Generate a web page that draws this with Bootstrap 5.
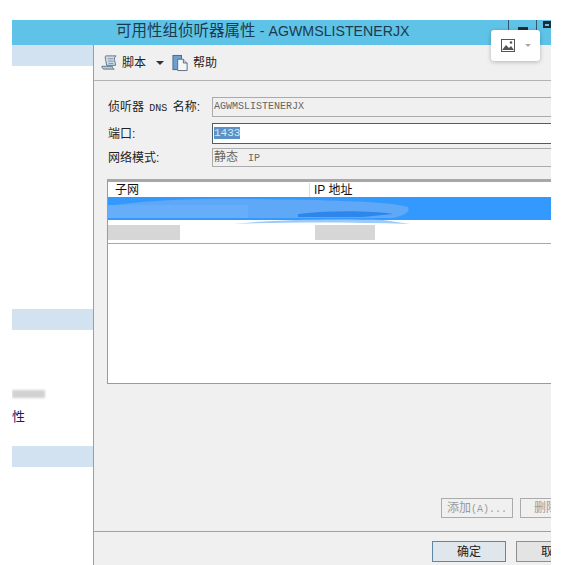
<!DOCTYPE html>
<html lang="zh-CN">
  <head>
    <meta charset="UTF-8" />
    <title>可用性组侦听器属性</title>
    <link href="https://cdn.jsdelivr.net/npm/bootstrap@5.3.0/dist/css/bootstrap.min.css" rel="stylesheet" />
    <style>
      html, body { height: 565px; overflow: hidden; background: #fff; }
      body { font-family: "Liberation Sans", "Noto Sans CJK SC", sans-serif; font-size: 12px; color: #222; }
      .shot { width: 539px; margin: 20px 0 0 12px; height: 545px; position: relative; overflow: hidden; }
      .titlebar { height: 25px; background: #5fc3e8; color: #1d3a4d; font-size: 15.5px; line-height: 22px; padding-left: 104px; white-space: nowrap; }
      .titlebar span { font-size: 14.2px; }
      .winbtns { position: absolute; top: 0; left: 496px; height: 15px; width: 43px; border-left: 1px solid #33586b; }
      .winbtns i { position: absolute; left: 9px; top: 7px; width: 10px; height: 3px; background: #1d2c36; }
      .winbtns b { position: absolute; left: 27px; top: 0; width: 16px; height: 15px; border-left: 1px solid #33586b; }
      .winbtns b::after { content: ""; position: absolute; left: 6px; top: 1px; width: 8px; height: 7px; border: 2px solid #1d2c36; border-top-width: 3px; }
      .dlgbody { height: 520px; }
      .sidepane { width: 81px; flex: none; background: #fff; }
      .sidestrip { height: 21px; background: #d3e2f0; }
      .sidegap1 { height: 243px; }
      .sideblur { width: 33px; height: 8px; background: #d2d2d2; margin-top: 60px; filter: blur(1px); }
      .sidetxt { color: #1b1b66; font-size: 13px; line-height: 18px; margin-top: 10px; height: 18px; }
      .sidestrip.last { margin-top: 20px; }
      .mainpane { flex: 1; min-width: 0; background: #f0f0f0; border-left: 1px solid #9e9e9e; }
      .toolstrip { height: 36px; border-bottom: 1px solid #b4b4b4; padding-left: 7px; font-size: 12px; flex: none; }
      .toolstrip svg { flex: none; }
      .caret-mini { width: 0; height: 0; border: 4px solid transparent; border-top-color: #333; border-bottom: 0; margin: 0 8px 0 10px; }
      .formzone { padding: 16px 0 0 14px; flex: none; }
      .fieldrow { margin-bottom: 4px; }
      .fieldrow.r1 { height: 20px; margin-bottom: 6px; }
      .fieldrow.r2 { height: 21px; }
      .fieldrow.r3 { height: 19px; margin-bottom: 0; }
      .fieldrow label { width: 104px; flex: none; font-size: 12px; white-space: nowrap; }
      .fake-input { flex: 1; height: 100%; border: 1px solid #ababab; border-right: 0; padding-left: 1px; font-size: 12px; color: #666; background: #f0f0f0; line-height: 17px; white-space: nowrap; }
      .fake-input.on { background: #fff; border-color: #4a5f6c; }
      .fake-input.on span { background: #5a92c8; color: #d8e8f5; font-family: "Liberation Mono", monospace; font-size: 11px; }
      .monotxt { font-family: "Liberation Mono", monospace; font-size: 10px; }
      .fake-input.monotxt { font-size: 10px; }
      .fieldrow label .monotxt { margin: 0 2px; }
      .fake-input .gapip { margin-left: 4px; }
      .gridbox { margin: 12px 0 0 13px; height: 205px; border: 1px solid #9b9b9b; border-top: 3px solid #a8a8a8; border-right: 0; background: #fff; position: relative; flex: none; }
      .gridhead { height: 15px; line-height: 15px; padding-top: 1px; font-size: 12px; color: #111; box-sizing: border-box; }
      .gridhead div:first-child { width: 202px; padding-left: 7px; border-right: 1px solid #ddd; }
      .gridhead div:last-child { padding-left: 4px; }
      .rowsel { height: 23px; background: #3399ff; }
      .rowplain { height: 24px; border-bottom: 1px solid #a8a8a8; background: #fff; }
      .smearlay { position: absolute; left: 0; top: 15px; }
      .blurcell { position: absolute; height: 15px; background: #d6d6d6; top: 43px; }
      .blurcell.b1 { left: 0; width: 72px; }
      .blurcell.b2 { left: 207px; width: 60px; }
      .actrow { margin-top: auto; padding: 0 0 13px 347px; flex: none; }
      .dlgbtn { height: 20px; width: 72px; flex: none; border: 1px solid #ababab; background: #f0f0f0; color: #9a9a9a; font-size: 12px; line-height: 18px; text-align: center; padding: 0; border-radius: 0; white-space: nowrap; }
      .delbtn { margin-left: 7px; text-align: left; padding-left: 13px; overflow: hidden; }
      .footzone { height: 34px; border-top: 1px solid #a0a0a0; flex: none; padding: 9px 0 0 338px; }
      .okbtn { width: 74px; height: 21px; background: #dfe6ec; color: #222; border-color: #5c87a8; }
      .cancelbtn { width: 60px; height: 21px; background: #e4e4e4; color: #222; border-color: #8f8f8f; text-align: left; padding-left: 24px; margin-left: 10px; }
      .imgpop { position: absolute; left: 479px; top: 10px; width: 49px; height: 31px; background: #fff; border-radius: 3px; box-shadow: 0 1px 4px rgba(0,0,0,.25); }
      .imgpop .caret-mini { border-width: 3px; border-bottom: 0; border-top-color: #aaa; margin: 0 0 0 10px; }
    </style>
  </head>
  <body>
    <div class="shot">
      <div class="titlebar">可用性组侦听器属性 <span>- AGWMSLISTENERJX</span></div>
      <div class="winbtns"><i></i><b></b></div>

      <div class="dlgbody d-flex">
        <div class="sidepane">
          <div class="sidestrip"></div>
          <div class="sidegap1"></div>
          <div class="sidestrip"></div>
          <div class="sideblur"></div>
          <div class="sidetxt">性</div>
          <div class="sidestrip last"></div>
        </div>

        <div class="mainpane d-flex flex-column">
          <div class="toolstrip d-flex align-items-center">
            <svg width="17" height="17" viewBox="0 0 18 18">
              <path d="M5 2h11c-2 1-2 3-1.500 5l1 5H6L5 7C4.600 5 4 3 5 2z" fill="#cfdde8" stroke="#5f7488" />
              <path d="M1 13h11c0 2 1 3 2 3H3c-1 0-2-1-2-3z" fill="#b9cad8" stroke="#5f7488" />
              <path d="M7 5h6M7.500 7.500h6M8 10h5" stroke="#7f92a4" />
            </svg>
            <span class="ms-1">脚本</span>
            <span class="caret-mini"></span>
            <svg width="17" height="18" viewBox="0 0 18 18">
              <rect x="1" y="1" width="9" height="15" fill="#6f9fd0" stroke="#49678a" />
              <path d="M6 5h6l4 4v8H6z" fill="#f4f6f8" stroke="#5c6c7c" />
              <path d="M12 5v4h4" fill="#c8d2dc" stroke="#5c6c7c" />
            </svg>
            <span class="ms-1">帮助</span>
          </div>

          <div class="formzone">
            <div class="fieldrow r1 d-flex align-items-center">
              <label>侦听器 <span class="monotxt">DNS</span> 名称:</label>
              <div class="fake-input monotxt">AGWMSLISTENERJX</div>
            </div>
            <div class="fieldrow r2 d-flex align-items-center">
              <label>端口:</label>
              <div class="fake-input on"><span>1433</span></div>
            </div>
            <div class="fieldrow r3 d-flex align-items-center">
              <label>网络模式:</label>
              <div class="fake-input">静态<span class="monotxt gapip"> IP</span></div>
            </div>
          </div>

          <div class="gridbox">
            <div class="gridhead d-flex"><div>子网</div><div>IP 地址</div></div>
            <div class="rowsel"></div>
            <div class="rowplain"></div>
            <svg class="smearlay" width="320" height="30" viewBox="0 0 320 30">
              <path d="M0 9C40 3 90 1 150 2C210 3 280 4 300 10C302 15 298 18 285 21H0z" fill="#5fa8f8" />
              <path d="M0 8H140V21H0z" fill="#66aefa" />
              <path d="M190 17C225 13 265 14 285 17L255 20H190z" fill="#2f86ea" />
              <path d="M125 27C170 22 230 22 275 23L302 27C240 25 180 25 125 27z" fill="#9ccbfb" />
            </svg>
            <div class="blurcell b1"></div>
            <div class="blurcell b2"></div>
          </div>

          <div class="actrow d-flex">
            <button class="dlgbtn" type="button">添加<span class="monotxt">(A)...</span></button>
            <button class="dlgbtn delbtn" type="button">删除</button>
          </div>

          <div class="footzone d-flex">
            <button class="dlgbtn okbtn" type="button">确定</button>
            <button class="dlgbtn cancelbtn" type="button">取消</button>
          </div>
        </div>
      </div>

      <div class="imgpop d-flex align-items-center justify-content-center">
        <svg width="14" height="13" viewBox="0 0 14 13">
          <rect x=".5" y=".5" width="13" height="12" fill="#fff" stroke="#555" />
          <path d="M1 11l4-5 3 3 2-2 3 4z" fill="#555" />
          <circle cx="10" cy="3.500" r="1.300" fill="#555" />
        </svg>
        <span class="caret-mini"></span>
      </div>
    </div>
    <script src="https://cdn.jsdelivr.net/npm/bootstrap@5.3.0/dist/js/bootstrap.bundle.min.js"></script>
  </body>
</html>
